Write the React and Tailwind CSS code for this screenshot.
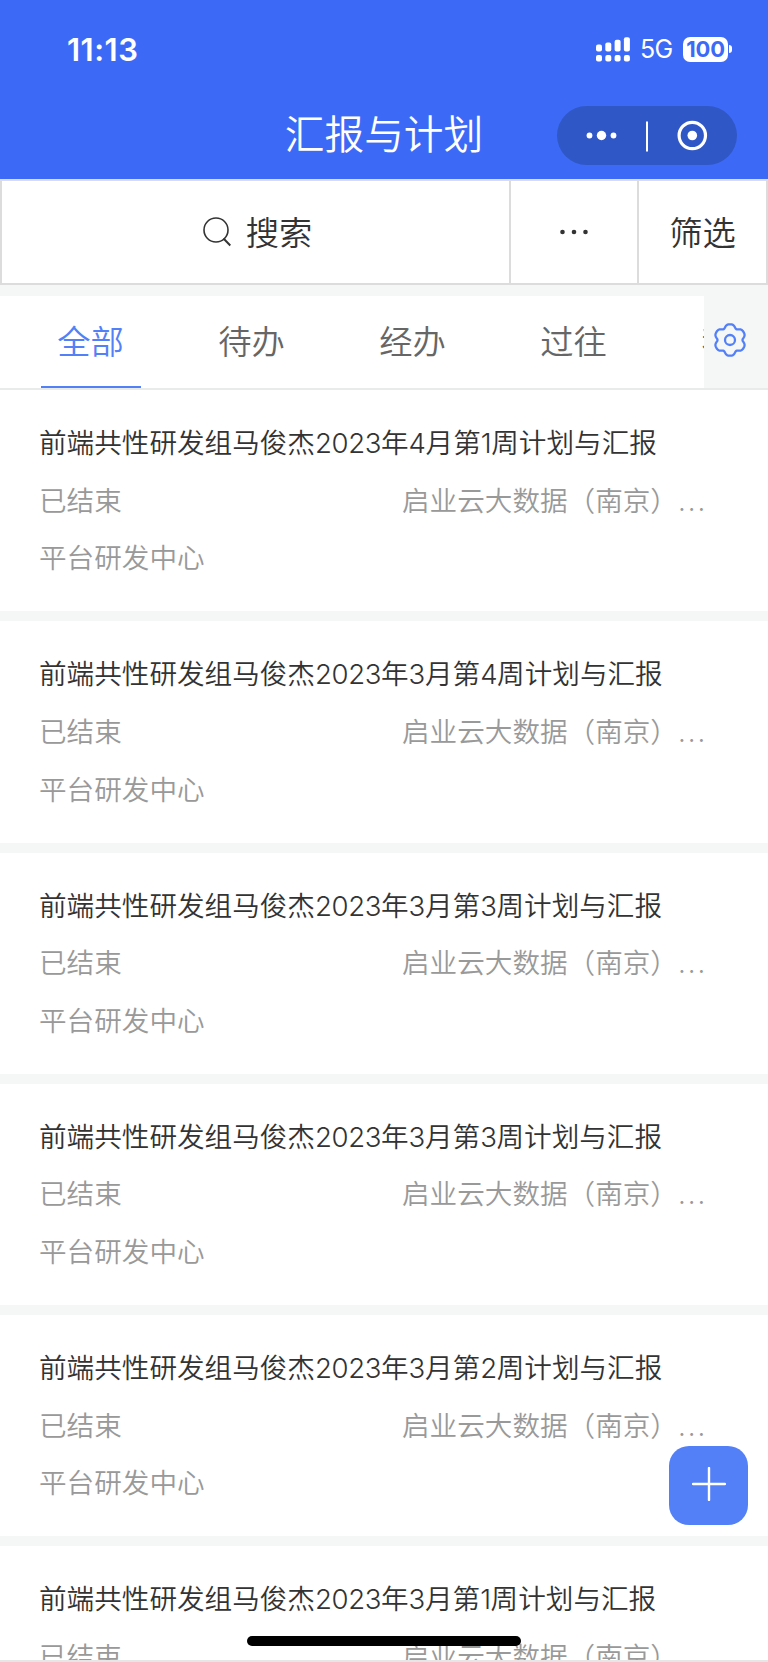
import React, { useState } from "react";

const tabs = ["全部", "待办", "经办", "过往", "我的"];

const reports = [
  { year: 2023, month: 4, week: 1 },
  { year: 2023, month: 3, week: 4 },
  { year: 2023, month: 3, week: 3 },
  { year: 2023, month: 3, week: 3 },
  { year: 2023, month: 3, week: 2 },
  { year: 2023, month: 3, week: 1 },
];

// six soft lobes around the centre, first one pointing up
const gearPoints = Array.from({ length: 120 }, (_, i) => {
  const angle = (i * 3 * Math.PI) / 180;
  const radius = 14.5 + 1.6 * Math.cos(6 * angle) - 0.4 * Math.cos(12 * angle);
  return `${(17 + radius * Math.sin(angle)).toFixed(2)},${(17 - radius * Math.cos(angle)).toFixed(2)}`;
}).join(" ");

function SignalIcon() {
  return (
    <svg width="34" height="25" viewBox="0 0 34 25" fill="#fff">
      <rect x="0" y="7.5" width="6" height="7" rx="2" />
      <rect x="9.3" y="5.5" width="6" height="9" rx="2" />
      <rect x="18.6" y="2.7" width="6" height="11.8" rx="2" />
      <rect x="27.9" y="0.3" width="6" height="14.2" rx="2" />
      <rect x="0" y="18" width="6" height="6.5" rx="2" />
      <rect x="9.3" y="18" width="6" height="6.5" rx="2" />
      <rect x="18.6" y="18" width="6" height="6.5" rx="2" />
      <rect x="27.9" y="18" width="6" height="6.5" rx="2" />
    </svg>
  );
}

function SearchIcon() {
  return (
    <svg width="28" height="30" viewBox="0 0 28 30" fill="none" stroke="#333" strokeWidth="1.6">
      <circle cx="13" cy="13" r="12" />
      <path d="M20.5 21.5L27.3 28.5" strokeWidth="2" />
    </svg>
  );
}

function GearIcon() {
  return (
    <svg width="34" height="34" viewBox="0 0 34 34" fill="none" stroke="#5480f7" strokeWidth="2.3" strokeLinejoin="round">
      <polygon points={gearPoints} />
      <circle cx="17" cy="17" r="5" />
    </svg>
  );
}

function Num({ children }) {
  return <span className="font-['Inter'] font-light tracking-[-0.4px]">{children}</span>;
}

function Header() {
  return (
    <div className="h-[179px] shrink-0 bg-[#3c6af6] text-white">
      <div className="flex h-[98px] items-center justify-between pl-[67px] pr-9">
        <span className="font-['Inter'] text-[31px] font-semibold leading-none tracking-[0.5px]">11:13</span>
        <div className="flex items-center">
          <SignalIcon />
          <span className="ml-[10px] w-8 font-['Inter'] text-[25px] leading-none tracking-[-0.6px]">5G</span>
          <span className="ml-[11px] flex h-[25px] w-[45px] items-center justify-center rounded-[7px] bg-white font-['Inter'] text-[22px] font-bold leading-none tracking-[-0.2px] text-[#3c6af6]">100</span>
          <span className="ml-px h-2 w-[3px] rounded-r-full bg-white" />
        </div>
      </div>
      <div className="grid h-[75px] grid-cols-[1fr_auto_1fr] items-center">
        <span />
        <h1 className="pb-2 text-[39.7px] font-[350] leading-none">汇报与计划</h1>
        <div className="mr-[31px] flex h-[59px] w-[180px] items-center justify-self-end rounded-full bg-[#3057c6]">
          <svg width="180" height="59" viewBox="0 0 180 59" fill="#fff">
            <circle cx="32.5" cy="29.5" r="2.9" />
            <circle cx="44.5" cy="29.5" r="4.7" />
            <circle cx="56.5" cy="29.5" r="2.9" />
            <rect x="89" y="15.5" width="2" height="30" />
            <circle cx="135.3" cy="29.5" r="13.2" fill="none" stroke="#fff" strokeWidth="3.2" />
            <circle cx="135.3" cy="29.5" r="4.8" />
          </svg>
        </div>
      </div>
    </div>
  );
}

function Toolbar() {
  return (
    <div className="flex h-[106px] shrink-0 border-2 border-[#dcdcdc] bg-white text-[33.3px] font-[350] leading-none text-[#333]">
      <button className="flex w-[509px] items-center justify-center gap-[15px] border-r-2 border-[#dcdcdc] pl-1">
        <SearchIcon />
        <span className="pb-[2px]">搜索</span>
      </button>
      <button className="flex w-32 items-center justify-center border-r-2 border-[#dcdcdc]">
        <svg width="28" height="6" viewBox="0 0 28 6" fill="#333">
          <circle cx="2.5" cy="3" r="2.3" />
          <circle cx="14" cy="3" r="2.3" />
          <circle cx="25.5" cy="3" r="2.3" />
        </svg>
      </button>
      <button className="flex-1 pb-[2px]">筛选</button>
    </div>
  );
}

function TabBar({ active, onChange }) {
  return (
    <div className="mt-[11px] flex h-[94px] shrink-0 border-b-2 border-[#e9ebeb] bg-white">
      <div className="flex w-[704px] overflow-hidden pl-[10px]">
        {tabs.map((tab, index) => (
          <button key={tab} className={`flex w-[161px] shrink-0 flex-col items-center text-[33.3px] font-[350] ${index === active ? "text-[#5480f7]" : "text-[#666]"}`} onClick={() => onChange(index)}>
            <span className="h-[90px] leading-[88px]">{tab}</span>
            {index === active && <span className="h-[2px] w-[100px] bg-[#5480f7]" />}
          </button>
        ))}
      </div>
      <button className="flex flex-1 items-center bg-[#f5f7f7] pb-1 pl-[9px]">
        <GearIcon />
      </button>
    </div>
  );
}

function ReportCard({ year, month, week }) {
  return (
    <div className="mb-[10px] h-[221.25px] shrink-0 bg-white px-[39px] pt-[23px] text-[27.6px] font-[350] leading-[57.7px] text-[#999]">
      <p className="h-[57.7px] whitespace-nowrap text-[#333]">
        前端共性研发组马俊杰<Num>{year}</Num>年<Num>{month}</Num>月第<Num>{week}</Num>周计划与汇报
      </p>
      <div className="grid h-[57.7px] grid-cols-[363px_1fr] whitespace-nowrap">
        <span>已结束</span>
        <span>
          启业云大数据（南京）<span className="font-['Inter'] tracking-[2px]">...</span>
        </span>
      </div>
      <p className="h-[57.7px]">平台研发中心</p>
    </div>
  );
}

export default function App() {
  const [active, setActive] = useState(0);

  return (
    <div className="relative flex h-[1662px] w-[768px] flex-col overflow-hidden bg-[#f5f7f7] font-['Noto_Sans_CJK_SC',sans-serif]">
      <Header />
      <Toolbar />
      <TabBar active={active} onChange={setActive} />
      {reports.map((report, index) => (
        <ReportCard key={index} {...report} />
      ))}

      {/* floating add button */}
      <button className="absolute right-5 top-[1446px] flex h-[79px] w-[79px] items-center justify-center rounded-[20px] bg-[#5480f7]">
        <svg width="34" height="34" viewBox="0 0 34 34" stroke="#fff" strokeWidth="2.4" strokeLinecap="round" className="-mt-1">
          <path d="M17 1V33M1 17H33" />
        </svg>
      </button>
      <div className="absolute bottom-0 left-0 h-[2px] w-full bg-[#e6e6e6]" />
      <div className="absolute left-[247px] top-[1636px] h-[10px] w-[274px] rounded-full bg-black" />
    </div>
  );
}
